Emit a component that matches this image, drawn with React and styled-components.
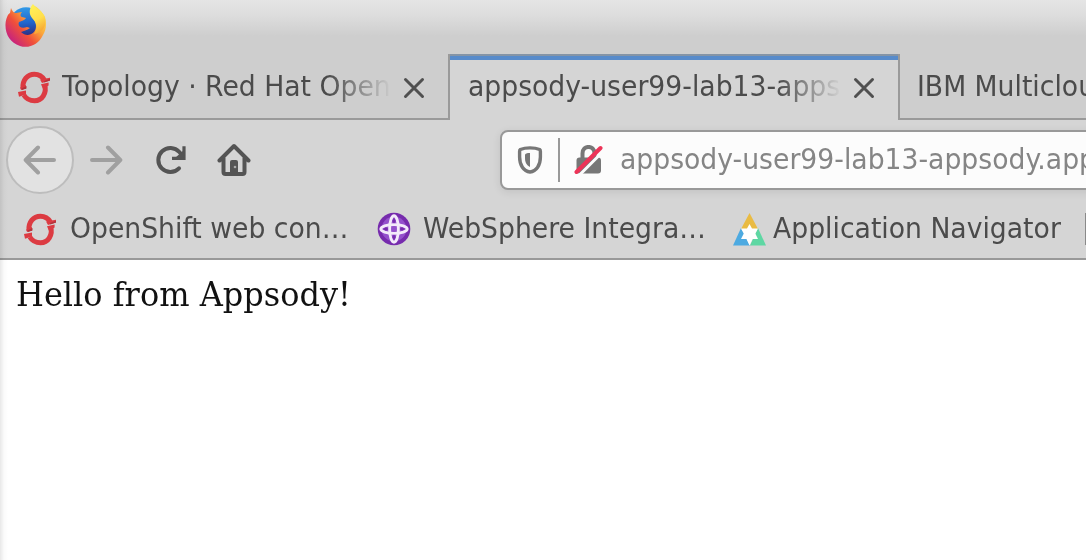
import React from "react";
import styled, { createGlobalStyle } from "styled-components";

const GlobalStyle = createGlobalStyle`
  * { box-sizing: border-box; }
  html, body { margin: 0; padding: 0; overflow: hidden; }
`;

const Window = styled.div`
  position: relative;
  width: 1086px;
  height: 560px;
  overflow: hidden;
  display: flex;
  flex-direction: column;
  background: #fff;
  color: #4b4b4b;
  font-family: "DejaVu Sans", sans-serif;
  font-size: 26.67px;
`;

const EdgeShade = styled.div`
  position: absolute;
  inset: 0 auto 0 0;
  width: 8px;
  pointer-events: none;
  background: linear-gradient(90deg, rgba(0, 0, 0, 0.09), rgba(0, 0, 0, 0.02) 50%, rgba(0, 0, 0, 0));
`;

const Chrome = styled.header`
  flex: none;
  height: 120px;
  display: flex;
  flex-direction: column;
  background: linear-gradient(#e5e5e5 0, #dedede 14px, #cecece 36px, #cecece 100%);
`;

const TitleBar = styled.div`
  height: 54px;
  padding: 4px 0 0 5px;
`;

const TabStrip = styled.nav`
  height: 66px;
  display: flex;
`;

const Tab = styled.div`
  flex: none;
  width: ${(p) => p.$width}px;
  height: 66px;
  display: flex;
  align-items: center;
  padding: 0 0 0 ${(p) => p.$pad}px;
  box-shadow: ${(p) => (p.$active ? "none" : "inset 0 -2px #9a9a9a")};
  ${(p) =>
    p.$active &&
    `
    background: linear-gradient(#8494a6 0 2px, #578bcb 2px 6px, #d5d5d5 6px);
    border-left: 2px solid #9a9a9a;
    border-right: 2px solid #9a9a9a;
  `}
`;

const Label = styled.span`
  display: block;
  white-space: pre;
  line-height: 34px;
  margin-left: ${(p) => p.$gap || 0}px;
  transform: scaleY(1.06);
  transform-origin: 0 26px;
`;

const TabLabel = styled(Label)`
  flex: none;
  width: ${(p) => p.$width}px;
  overflow: hidden;
  ${(p) => p.$fade && "mask-image: linear-gradient(90deg, #000 calc(100% - 64px), transparent);"}
`;

const CloseSlot = styled.span`
  display: flex;
  margin: 1px 0 0 ${(p) => p.$gap}px;
`;

const NavBar = styled.div`
  flex: none;
  height: 80px;
  display: flex;
  align-items: center;
  background: #d5d5d5;
  padding-left: 6px;
`;

const BackButton = styled.button`
  flex: none;
  width: 68px;
  height: 68px;
  border-radius: 50%;
  border: 2px solid #bdbdbd;
  background: #e2e2e2;
  padding: 0;
  display: grid;
  place-items: center;
`;

const ToolButton = styled.button`
  flex: none;
  width: 64px;
  height: 64px;
  border: 0;
  background: none;
  padding: 0;
  display: grid;
  place-items: center;
`;

const AddressBar = styled.div`
  flex: none;
  width: 700px;
  height: 60px;
  margin-left: 234px;
  border: 2px solid #999;
  border-radius: 8px;
  background: #fcfcfc;
  box-shadow: 0 2px 8px rgba(0, 0, 0, 0.09);
  color: #858585;
  display: flex;
  align-items: center;
  padding-left: 15px;
`;

const Divider = styled.span`
  width: 2px;
  height: 44px;
  background: #999;
  margin: 0 14px 0 15px;
`;

const BookmarkBar = styled.div`
  flex: none;
  height: 60px;
  background: #d5d5d5;
  border-bottom: 2px solid #999;
  display: flex;
  align-items: center;
  padding-left: 24px;
`;

const Bookmark = styled.div`
  flex: none;
  width: ${(p) => p.$width}px;
  height: 34px;
  display: flex;
  align-items: center;
  svg { flex: none; }
`;

const NextBookmark = styled.span`
  flex: none;
  width: 2px;
  height: 32px;
  background: #8a8a8a;
`;

const Page = styled.main`
  flex: 1;
  padding: 17px 16px;
  color: #111;
  font: 32px/36px "DejaVu Serif", serif;
`;

const Greeting = styled.p`
  margin: 0;
  white-space: pre;
  transform: scaleY(1.06);
  transform-origin: 0 29px;
`;

function FirefoxLogo() {
  return (
    <svg width="44" height="44" viewBox="0 0 44 44">
      <defs>
        <linearGradient id="fox" x1="0.9" y1="0.15" x2="0.15" y2="0.85">
          <stop offset="0" stopColor="#ffe24a" />
          <stop offset="0.35" stopColor="#fba63a" />
          <stop offset="0.65" stopColor="#f0503a" />
          <stop offset="1" stopColor="#c8247c" />
        </linearGradient>
        <linearGradient id="globe" x1="0.4" y1="0" x2="0.5" y2="1">
          <stop offset="0" stopColor="#329be8" />
          <stop offset="0.5" stopColor="#2065cc" />
          <stop offset="1" stopColor="#302070" />
        </linearGradient>
        <linearGradient id="flame" x1="0" y1="0" x2="0.3" y2="1">
          <stop offset="0" stopColor="#fff45a" />
          <stop offset="0.6" stopColor="#ffdf4c" />
          <stop offset="1" stopColor="#f8aa35" />
        </linearGradient>
      </defs>
      <circle cx="21" cy="19" r="15.8" fill="url(#globe)" />
      <path d="M6 4C7 7 9 9 11 9L17 8C15 10 15 12 17 13L21 14C19 17 16 17 14 18C12 23 17 25 22 23L25 24C21 27 18 27 16 28C22 34 31 30 31 22C31 16 26 12 25 7L28 1C34 4 36 7 38 10C42 16 42 25 38 31C34 40 24 45 15 42C5 39 0 30 0.5 20C1 14 3 10 5 9Z" fill="url(#fox)" />
      <path d="M28 0C25 3 23 9 27 14C32 19 33 24 29 30C38 29 42 21 40 13C38 7 31 5 28 0Z" fill="url(#flame)" />
    </svg>
  );
}

function OpenShiftLogo() {
  return (
    <svg width="32" height="34" viewBox="0 0 32 34">
      <g fill="none" stroke="#dc3b42" strokeWidth="5">
        <path d="M5 18.5C4.2 10 9.6 4.2 16.4 4.2C21 4.2 24.4 6.6 26.4 10" />
        <path d="M26.6 14.5C29.2 23 24 30.8 16.5 30.8C11.8 30.8 8.2 28.8 5.8 25" />
      </g>
      <path d="M22 9.5L32 7.8V10.4L24 12.9ZM23 14.3L30.6 12.4V15.6L25 19ZM2.2 17.4L8 15V18.5L3 20ZM0 22L8 20.4V24.4L1 26.8Z" fill="#dc3b42" />
      <path d="M26 11L32 8.8V10.4L26.4 12.6ZM3.4 18.4L8.5 16V18.4L4 20Z" fill="#b4343c" />
    </svg>
  );
}

function WebSphereLogo() {
  return (
    <svg width="34" height="34" viewBox="0 0 34 34">
      <circle cx="17" cy="17" r="16.3" fill="#762bad" />
      <circle cx="17" cy="17" r="12.5" fill="#9450cc" />
      <g fill="none" stroke="#f3eafa" strokeWidth="2.9">
        <ellipse cx="17" cy="17" rx="4.4" ry="13.2" />
        <ellipse cx="17" cy="17" rx="13.2" ry="4.4" />
      </g>
      <path d="M17 6L18.8 9L17 11.5L15.2 9ZM17 22.5L18.8 25L17 28L15.2 25ZM6 17L9 15.2L11.5 17L9 18.8ZM22.5 17L25 15.2L28 17L25 18.8Z" fill="#762bad" />
    </svg>
  );
}

function NavigatorLogo() {
  return (
    <svg width="33" height="33" viewBox="0 0 33 33">
      <path d="M16.5 0L25 16H8Z" fill="#e9bb43" />
      <path d="M8 15L17 32.5H0Z" fill="#4daae1" />
      <path d="M25 15L33 32.5H17Z" fill="#5ed7a3" />
      <path d="M16.5 11L19 15.5H25L22.3 20.5L25 26H19.5L16.5 32.5L13.5 26H8L10.8 20.5L8 15.5H14Z" fill="#fff" />
    </svg>
  );
}

function CloseIcon() {
  return (
    <svg width="22" height="22" viewBox="0 0 22 22">
      <path d="M2.5 2.5L19.5 19.5M19.5 2.5L2.5 19.5" stroke="#505050" strokeWidth="3" strokeLinecap="round" />
    </svg>
  );
}

function ArrowIcon({ flip }) {
  return (
    <svg width="34" height="32" viewBox="0 0 34 32">
      <path
        d={flip ? "M3 16H30M19 3.5L31.3 16L19 28.5" : "M31 16H4M15 3.5L2.7 16L15 28.5"}
        fill="none" stroke="#a0a0a0" strokeWidth="4" strokeLinecap="round" strokeLinejoin="round"
      />
    </svg>
  );
}

function ReloadIcon() {
  return (
    <svg width="32" height="32" viewBox="0 0 32 32">
      <path d="M25 24.3A12 12 0 1 1 25.3 8L28 11" fill="none" stroke="#545454" strokeWidth="4" strokeLinecap="round" />
      <path d="M30 2.2V14.3H18" fill="none" stroke="#545454" strokeWidth="3.2" />
      <path d="M30 6L29 14H21Z" fill="#545454" />
    </svg>
  );
}

function HomeIcon() {
  return (
    <svg width="34" height="34" viewBox="0 0 34 34">
      <path d="M2.5 17.5L17 3L31.5 17.5M6.5 15V29C6.5 30.5 7 31 8.5 31H25.5C27 31 27.5 30.5 27.5 29V15" fill="none" stroke="#545454" strokeWidth="4" strokeLinejoin="round" strokeLinecap="round" />
      <path d="M13 31V19Q13 17 15 17H19Q21 17 21 19V31Z" fill="#545454" />
      <circle cx="18" cy="24" r="1.3" fill="#aaa" />
    </svg>
  );
}

function ShieldIcon() {
  return (
    <svg width="26" height="28" viewBox="0 0 26 28">
      <path d="M13 1.9C17 1.9 20 2.4 22.6 3.5C23.4 4 23.4 4.5 23.4 5.5V11C23.4 19 19.5 25.3 13 26C6.5 25.3 2.6 19 2.6 11V5.5C2.6 4.5 2.6 4 3.4 3.5C6 2.4 9 1.9 13 1.9Z" fill="none" stroke="#777" strokeWidth="3.4" />
      <path d="M13 7V21C9.5 19.5 8 16 8 12V8.5C8 7.6 10 7 13 7Z" fill="#777" />
    </svg>
  );
}

function InsecureIcon() {
  return (
    <svg width="30" height="30" viewBox="0 0 30 30">
      <path d="M8.5 14V8.5C8.5 -0.3 20.5 -0.3 20.5 8.5V14" fill="none" stroke="#777" strokeWidth="4" />
      <rect x="2.5" y="12.5" width="24.5" height="16" rx="3" fill="#777" />
      <path d="M5 30.5L29.5 6" stroke="#fcfcfc" strokeWidth="3" />
      <path d="M2.5 27L26.5 3" stroke="#ed3458" strokeWidth="4" strokeLinecap="round" />
    </svg>
  );
}

export default function App() {
  return (
    <>
      <GlobalStyle />
      <Window>
        <Chrome>
          <TitleBar><FirefoxLogo /></TitleBar>
          <TabStrip>
            <Tab $width={448} $pad={18}>
              <OpenShiftLogo />
              <TabLabel $width={330} $gap={12} $fade>Topology · Red Hat Open</TabLabel>
              <CloseSlot $gap={11}><CloseIcon /></CloseSlot>
            </Tab>
            <Tab $width={452} $pad={18} $active>
              <TabLabel $width={374} $fade>appsody-user99-lab13-apps</TabLabel>
              <CloseSlot $gap={11}><CloseIcon /></CloseSlot>
            </Tab>
            <Tab $width={186} $pad={17}>
              <TabLabel $width={169}>IBM Multiclou</TabLabel>
            </Tab>
          </TabStrip>
        </Chrome>
        <NavBar>
          <BackButton aria-label="Back"><ArrowIcon /></BackButton>
          <ToolButton aria-label="Forward"><ArrowIcon flip /></ToolButton>
          <ToolButton aria-label="Reload"><ReloadIcon /></ToolButton>
          <ToolButton aria-label="Home"><HomeIcon /></ToolButton>
          <AddressBar>
            <ShieldIcon />
            <Divider />
            <InsecureIcon />
            <Label $gap={16}>appsody-user99-lab13-appsody.app</Label>
          </AddressBar>
        </NavBar>
        <BookmarkBar>
          <Bookmark $width={353}>
            <OpenShiftLogo /><Label $gap={14}>OpenShift web con…</Label>
          </Bookmark>
          <Bookmark $width={356}>
            <WebSphereLogo /><Label $gap={12}>WebSphere Integra…</Label>
          </Bookmark>
          <Bookmark $width={352}>
            <NavigatorLogo /><Label $gap={7}>Application Navigator</Label>
          </Bookmark>
          <NextBookmark />
        </BookmarkBar>
        <Page><Greeting>Hello from Appsody!</Greeting></Page>
        <EdgeShade />
      </Window>
    </>
  );
}
